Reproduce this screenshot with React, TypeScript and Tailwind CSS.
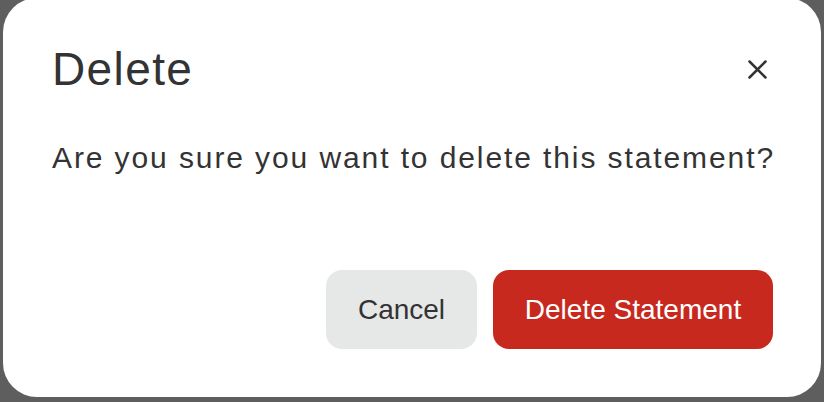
export default function App() {
  return (
    <div className="w-[824px] h-[402px] overflow-hidden bg-[#5e5e5e] px-[3px]">
      <div
        className="-mt-[2px] h-[399px] rounded-[34px] bg-white flex flex-col pl-[49px] pr-[48px] pb-[48px] text-[#333333]"
        style={{ fontFamily: '"Liberation Sans", Arial, sans-serif' }}
      >
        {/* Header */}
        <div className="mt-[48px] flex items-center justify-between">
          <h2 className="text-[46px] leading-none tracking-[0.03em]">Delete</h2>
          <button className="mr-[6px] w-[20px] h-[20px] flex items-center justify-center">
            <svg width="19" height="19" viewBox="0 0 19 19" fill="none">
              <path d="M1.5 1.5 17.5 17.5 M17.5 1.5 1.5 17.5" stroke="#333" strokeWidth="2.5" strokeLinecap="round" />
            </svg>
          </button>
        </div>

        {/* Body */}
        <p className="mt-[51px] text-[30px] leading-none tracking-[1.9px] whitespace-nowrap">
          Are you sure you want to delete this statement?
        </p>

        {/* Actions */}
        <div className="mt-auto flex justify-end gap-[16px]">
          <button className="w-[151px] h-[79px] rounded-[16px] bg-[#e6e7e7] text-[28px] text-[#333]">
            Cancel
          </button>
          <button className="w-[280px] h-[79px] rounded-[16px] bg-[#c8291f] text-[28px] text-white">
            Delete Statement
          </button>
        </div>
      </div>
    </div>
  );
}
